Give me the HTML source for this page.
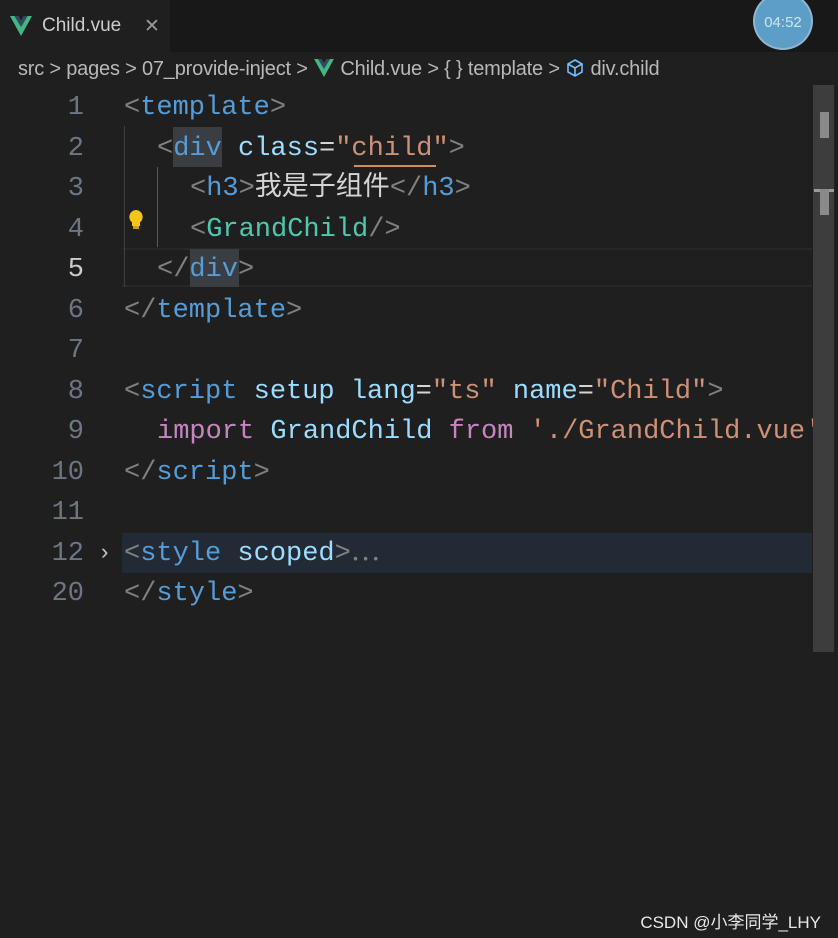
<!DOCTYPE html>
<html><head><meta charset="utf-8"><style>
body{margin:0;width:838px;height:938px;background:#1f1f1f;overflow:hidden;position:relative;font-family:"Liberation Sans","Noto Sans CJK SC",sans-serif;}
.tabbar{position:absolute;left:0;top:0;width:838px;height:52px;background:#181818;}
.tab{position:absolute;left:0;top:0;width:170px;height:52px;background:#1f1f1f;}
.tab span{position:absolute;top:15px;font-size:19px;color:#cccccc;}
.crumb{position:absolute;left:18px;top:58px;font-size:20px;color:#b8b8b8;white-space:nowrap;letter-spacing:-0.2px}
.code{position:absolute;left:0;top:88px;font-family:"Liberation Mono","Noto Sans CJK SC",monospace;font-size:27px;}
.ln{position:absolute;height:40.5px;line-height:40.5px;white-space:pre;}
.num{position:absolute;width:84px;text-align:right;color:#6e7681;height:40.5px;line-height:40.5px;}
.p{color:#808080}.t{color:#569cd6}.a{color:#9cdcfe}.s{color:#ce9178}.w{color:#d4d4d4}.c{color:#4ec9b0}.k{color:#c586c0}
</style></head><body>
<div class="tabbar"><div class="tab">
<svg style="position:absolute;left:10px;top:16px" width="22" height="20" viewBox="0 0 22 20"><path d="M0 0h4.5L11 11 17.5 0H22L11 20z" fill="#41b883"/><path d="M4.5 0h4L11 4.5 13.5 0h4L11 11z" fill="#35495e"/></svg>
<span style="left:42px">Child.vue</span><span style="left:144px;color:#999">✕</span></div>
<div style="position:absolute;left:753px;top:-8px;width:60px;height:58px;border-radius:50%;background:#5d9ec7;border:2px solid #8fb6cf;color:#cfe4f2;font-size:15px;text-align:center;line-height:58px;box-sizing:border-box">04:52</div>
</div>
<div class="crumb">src &gt; pages &gt; 07_provide-inject &gt; <svg width="22" height="18" viewBox="0 0 22 20" style="vertical-align:-2px"><path d="M0 0h4.5L11 11 17.5 0H22L11 20z" fill="#41b883"/><path d="M4.5 0h4L11 4.5 13.5 0h4L11 11z" fill="#35495e"/></svg> Child.vue &gt; { } template &gt; <svg width="20" height="20" viewBox="0 0 20 20" style="vertical-align:-3px"><path d="M10 2l7 4v8l-7 4-7-4V6zM3 6l7 4 7-4M10 10v8" fill="none" stroke="#75beff" stroke-width="1.6"/></svg> div.child</div>
<div style="position:absolute;left:122px;top:248px;width:690px;height:39px;border-top:2px solid #282828;border-bottom:2px solid #282828;box-sizing:border-box"></div>
<div style="position:absolute;left:122px;top:533px;width:690px;height:40px;background:#222a35"></div>
<div style="position:absolute;left:124px;top:126px;width:1px;height:161px;background:#404040"></div>
<div style="position:absolute;left:157px;top:167px;width:1px;height:80px;background:#5a5a5a"></div>
<div style="position:absolute;left:173px;top:127px;width:49px;height:40px;background:#3a3d41"></div>
<div style="position:absolute;left:190px;top:249px;width:49px;height:38px;background:#3a3d41"></div>
<div style="position:absolute;left:354px;top:165px;width:82px;height:2px;background:#d18f5f"></div>
<svg style="position:absolute;left:127px;top:209px" width="18" height="22" viewBox="0 0 18 22"><path d="M9 1a7 7 0 0 0-4 12.5V17h8v-3.5A7 7 0 0 0 9 1z" fill="#f5c518"/><rect x="6" y="17" width="6" height="3" fill="#d0a000"/></svg>
<div class="code">
<div class="num" style="top:0">1</div><div class="ln" style="top:0;left:124px"><span class="p">&lt;</span><span class="t">template</span><span class="p">&gt;</span></div>
<div class="num" style="top:40.5px">2</div><div class="ln" style="top:40.5px;left:157px"><span class="p">&lt;</span><span class="t">div</span> <span class="a">class</span><span class="w">=</span><span class="s">"child"</span><span class="p">&gt;</span></div>
<div class="num" style="top:81px">3</div><div class="ln" style="top:81px;left:190px"><span class="p">&lt;</span><span class="t">h3</span><span class="p">&gt;</span><span class="w">我是子组件</span><span class="p">&lt;/</span><span class="t">h3</span><span class="p">&gt;</span></div>
<div class="num" style="top:121.5px">4</div><div class="ln" style="top:121.5px;left:190px"><span class="p">&lt;</span><span class="c">GrandChild</span><span class="p">/&gt;</span></div>
<div class="num" style="top:162px;color:#cccccc">5</div><div class="ln" style="top:162px;left:157px"><span class="p">&lt;/</span><span class="t">div</span><span class="p">&gt;</span></div>
<div class="num" style="top:202.5px">6</div><div class="ln" style="top:202.5px;left:124px"><span class="p">&lt;/</span><span class="t">template</span><span class="p">&gt;</span></div>
<div class="num" style="top:243px">7</div>
<div class="num" style="top:283.5px">8</div><div class="ln" style="top:283.5px;left:124px"><span class="p">&lt;</span><span class="t">script</span> <span class="a">setup</span> <span class="a">lang</span><span class="w">=</span><span class="s">"ts"</span> <span class="a">name</span><span class="w">=</span><span class="s">"Child"</span><span class="p">&gt;</span></div>
<div class="num" style="top:324px">9</div><div class="ln" style="top:324px;left:157px"><span class="k">import</span> <span class="a">GrandChild</span> <span class="k">from</span> <span class="s">'./GrandChild.vue'</span></div>
<div class="num" style="top:364.5px">10</div><div class="ln" style="top:364.5px;left:124px"><span class="p">&lt;/</span><span class="t">script</span><span class="p">&gt;</span></div>
<div class="num" style="top:405px">11</div>
<div class="num" style="top:445.5px">12</div><div class="ln" style="top:445.5px;left:98px;color:#c5c5c5;font-size:22px">›</div><div class="ln" style="top:445.5px;left:124px"><span class="p">&lt;</span><span class="t">style</span> <span class="a">scoped</span><span class="p">&gt;</span><span class="p">⋯</span></div>
<div class="num" style="top:486px">20</div><div class="ln" style="top:486px;left:124px"><span class="p">&lt;/</span><span class="t">style</span><span class="p">&gt;</span></div>
</div>
<div style="position:absolute;left:813px;top:85px;width:21px;height:567px;background:#3d3d3d"></div>
<div style="position:absolute;left:820px;top:112px;width:9px;height:26px;background:#8a8a8a"></div>
<div style="position:absolute;left:814px;top:189px;width:20px;height:3px;background:#9a9a9a"></div>
<div style="position:absolute;left:820px;top:189px;width:9px;height:26px;background:#8a8a8a"></div>
<div style="position:absolute;right:17px;top:908px;font-size:17px;color:#e8e8e8">CSDN @小李同学_LHY</div>
</body></html>
